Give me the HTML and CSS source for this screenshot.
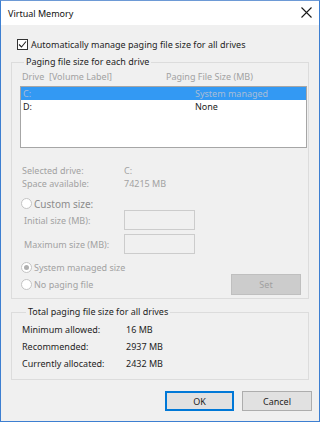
FILE: index.html
```html
<!DOCTYPE html>
<html lang="en">
<head>
	<meta charset="UTF-8">
	<title>Virtual Memory</title>
	<link rel="stylesheet" href="styles.css">
</head>
<body>
	<div class="window">
		<div class="titlebar">
			<span class="title">Virtual Memory</span>
			<svg class="close" width="11" height="11" viewBox="0 0 11 11"><path d="M0.5 0.5 L10.5 10.5 M10.5 0.5 L0.5 10.5" stroke="#1a1a1a" stroke-width="1.1" fill="none"/></svg>
		</div>
		<div class="content">
			<label class="check">
				<span class="checkbox"><svg width="9" height="9" viewBox="0 0 9 9"><path d="M1 4.5 L3.5 7 L8 1.5" stroke="#222" stroke-width="1.1" fill="none"/></svg></span>
				Automatically manage paging file size for all drives
			</label>

			<fieldset class="group drives">
				<legend>Paging file size for each drive</legend>
				<div class="list-head disabled">
					<span class="col-drive">Drive&nbsp; [Volume Label]</span>
					<span>Paging File Size (MB)</span>
				</div>
				<ul class="list">
					<li class="selected"><span class="col-drive">C:</span><span>System managed</span></li>
					<li><span class="col-drive">D:</span><span>None</span></li>
				</ul>

				<dl class="info disabled">
					<dt>Selected drive:</dt><dd>C:</dd>
					<dt>Space available:</dt><dd>74215 MB</dd>
				</dl>

				<div class="radio custom disabled"><span class="dot"></span>Custom size:</div>
				<div class="field disabled"><span class="field-label">Initial size (MB):</span><span class="input"></span></div>
				<div class="field max disabled"><span class="field-label">Maximum size (MB):</span><span class="input"></span></div>
				<div class="radio system disabled"><span class="dot on"></span>System managed size</div>
				<div class="radio-row">
					<div class="radio disabled"><span class="dot"></span>No paging file</div>
					<span class="btn set">Set</span>
				</div>
			</fieldset>

			<fieldset class="group totals">
				<legend>Total paging file size for all drives</legend>
				<dl class="sums">
					<dt>Minimum allowed:</dt><dd>16 MB</dd>
					<dt>Recommended:</dt><dd>2937 MB</dd>
					<dt>Currently allocated:</dt><dd>2432 MB</dd>
				</dl>
			</fieldset>

			<div class="buttons">
				<span class="btn default">OK</span>
				<span class="btn">Cancel</span>
			</div>
		</div>
	</div>
</body>
</html>
```

FILE: styles.css
```css
* {
	box-sizing: border-box;
}

body {
	margin: 0;
	font-family: "Noto Sans", "Open Sans", sans-serif;
	font-size: 9px;
	color: #1e1e1e;
}

.window {
	width: 320px;
	height: 422px;
	border: 1px solid #3d7fd1;
	border-top-color: #6d9ad6;
	background: #f0f0f0;
	display: flex;
	flex-direction: column;
}

.titlebar {
	height: 24px;
	background: #fff;
	display: flex;
	align-items: center;
	justify-content: space-between;
	padding: 0 7px 0 7px;
}

.title {
	font-size: 9px;
	color: #111;
}

.close {
	margin-top: -1px;
}

.content {
	flex: 1;
	padding: 12px 7px 0 10px;
}

.disabled {
	color: #a2a2a2;
}

.check {
	display: flex;
	align-items: center;
	height: 14px;
	padding-left: 6px;
	gap: 3px;
}

.checkbox {
	width: 11px;
	height: 11px;
	border: 1px solid #333;
	background: #fff;
	display: flex;
	align-items: center;
	justify-content: center;
}

.group {
	margin: 0;
	border: 1px solid #dcdcdc;
	width: 298px;
}

.group legend {
	padding: 0 2px;
	margin-left: 4px;
	line-height: 14px;
}

.drives {
	margin-top: 4px;
	padding: 1px 1px 3px 8px;
}

.list-head {
	display: flex;
	height: 14px;
	line-height: 14px;
	padding-left: 2px;
}

.col-drive {
	width: 144px;
}

.list {
	list-style: none;
	margin: 2px 0 0;
	padding: 0;
	height: 62px;
	border: 1px solid #a6a6a6;
	background: #fff;
}

.list li {
	display: flex;
	height: 13px;
	line-height: 13px;
	padding-left: 2px;
}

.list li .col-drive {
	width: 172px;
}

.list li.selected {
	background: #3399f3;
	color: #a8bdd6;
}

.info {
	display: grid;
	grid-template-columns: 102px 1fr;
	margin: 16px 0 0;
	padding-left: 2px;
	line-height: 13px;
}

.info dt, .info dd, .sums dt, .sums dd {
	margin: 0;
}

.radio {
	display: flex;
	align-items: center;
	gap: 2px;
	height: 13px;
	padding-left: 1px;
}

.radio.custom {
	margin-top: 7px;
	font-size: 10px;
	color: #8c8c8c;
}

.dot {
	width: 11px;
	height: 11px;
	border-radius: 50%;
	border: 1px solid #c4c4c4;
	background: #fff;
	display: flex;
	align-items: center;
	justify-content: center;
}

.dot.on::after {
	content: "";
	width: 5px;
	height: 5px;
	border-radius: 50%;
	background: #b0b0b0;
}

.field {
	display: flex;
	align-items: center;
	height: 20px;
	padding-left: 4px;
}

.field.max {
	margin-top: 4px;
}

.field-label {
	width: 100px;
}

.input {
	width: 71px;
	height: 20px;
	border: 1px solid #cccccc;
	background: #f0f0f0;
}

.radio.system {
	margin-top: 7px;
}

.radio-row {
	display: flex;
	align-items: center;
	justify-content: space-between;
	height: 21px;
	padding-right: 6px;
}

.btn {
	display: flex;
	align-items: center;
	justify-content: center;
	height: 20px;
	width: 70px;
	border: 1px solid #adadad;
	background: #e1e1e1;
}

.btn.set {
	height: 21px;
	border-color: #bfbfbf;
	background: #cccccc;
	color: #a0a0a0;
}

.totals {
	margin-top: 6px;
	padding: 2px 8px 7px 10px;
}

.sums {
	display: grid;
	grid-template-columns: 104px 1fr;
	grid-auto-rows: 17px;
	align-items: center;
	margin: 0;
}

.buttons {
	display: flex;
	justify-content: flex-end;
	gap: 8px;
	margin-top: 11px;
}

.btn.default {
	width: 69px;
	border: 1px solid #0078d7;
	box-shadow: inset 0 0 0 1px #0078d7;
}
```
